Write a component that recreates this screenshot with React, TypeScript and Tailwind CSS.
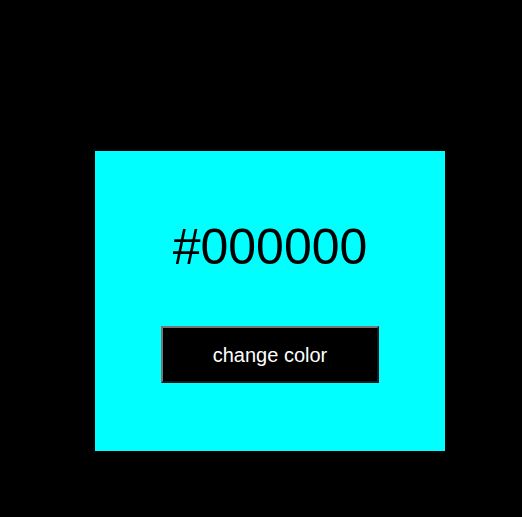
import { useState } from 'react';

const App = () => {
  const [color] = useState('#000000');

  return (
    <div className="min-h-screen w-full bg-black pt-[151px] pl-[95px]" style={{ fontFamily: '"Liberation Sans", Arial, sans-serif' }}>
      <div className="w-[350px] h-[300px] bg-[#00ffff] flex flex-col items-center justify-center gap-[51px]">
        <h1 className="text-[50px] leading-[56px] text-black">{color}</h1>
        <button className="w-[218px] h-[57px] bg-black text-white text-[20px] border-2 border-t-[#767676] border-l-[#767676] border-r-[#1a1a1a] border-b-[#1a1a1a]">
          change color
        </button>
      </div>
    </div>
  );
};

export default App;
